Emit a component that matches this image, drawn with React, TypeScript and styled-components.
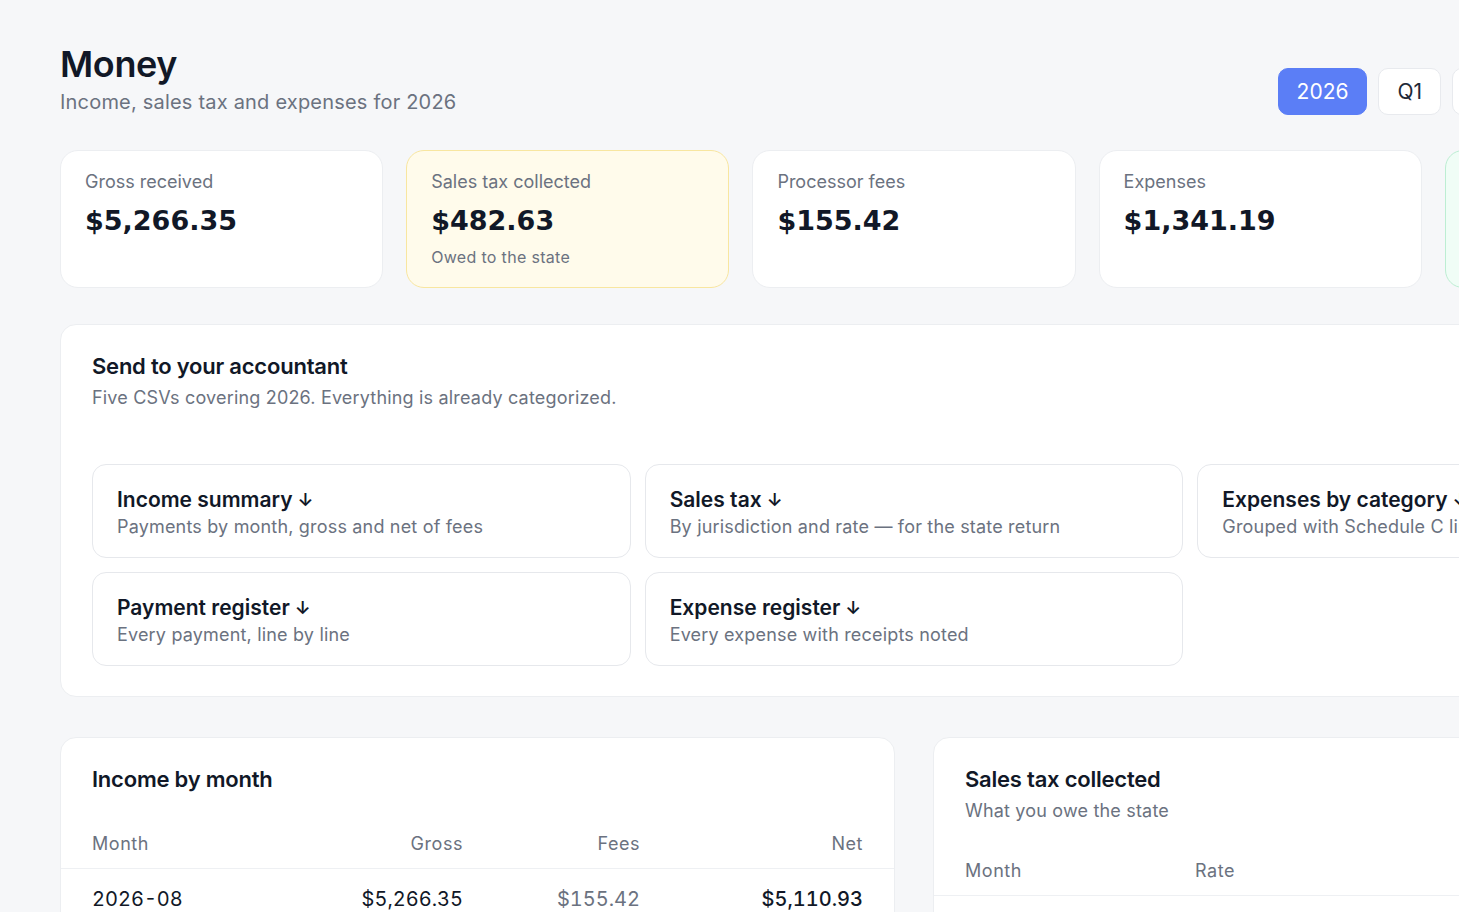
import React from 'react';
import styled, { createGlobalStyle } from 'styled-components';

const GlobalStyle = createGlobalStyle`
  html, body {
    margin: 0;
    padding: 0;
    overflow: hidden;
    background: #f6f7f9;
  }
  body {
    font-family: Inter, "Noto Sans", sans-serif;
    color: #111827;
  }
  * {
    box-sizing: border-box;
  }
`;

const Page = styled.div`
  width: 1828px;
  padding: 44px 60px 60px;
`;

const Header = styled.header`
  display: flex;
  justify-content: space-between;
  align-items: flex-start;
`;

const Title = styled.h1`
  margin: 0;
  font-size: 36px;
  line-height: 40px;
  font-weight: 600;
  letter-spacing: -0.01em;
`;

const Subtitle = styled.p`
  margin: 5px 0 0;
  font-size: 20px;
  line-height: 26px;
  color: #6b7280;
  letter-spacing: 0.01em;
`;

const PeriodGroup = styled.div`
  display: flex;
  gap: 11px;
  margin-top: 24px;
`;

const PeriodButton = styled.button<{ $active?: boolean }>`
  height: 47px;
  min-width: 60px;
  padding: 0 18px;
  border-radius: 10px;
  font-family: inherit;
  font-size: 21px;
  border: 1px solid ${({ $active }) => ($active ? '#5b7ef6' : '#e8eaee')};
  background: ${({ $active }) => ($active ? '#5b7ef6' : '#ffffff')};
  color: ${({ $active }) => ($active ? '#ffffff' : '#1f2937')};
  cursor: pointer;
`;

const StatGrid = styled.section`
  display: grid;
  grid-template-columns: repeat(5, 1fr);
  gap: 23px;
  margin-top: 35px;
`;

type Tone = 'plain' | 'warn' | 'good';

const toneBg: Record<Tone, string> = {
  plain: '#ffffff',
  warn: '#fffbeb',
  good: '#f0fdf6',
};

const toneBorder: Record<Tone, string> = {
  plain: '#eceef1',
  warn: '#f8e6a0',
  good: '#bdeed3',
};

const StatCard = styled.div<{ $tone: Tone }>`
  min-height: 138px;
  padding: 19px 24px;
  border-radius: 18px;
  background: ${({ $tone }) => toneBg[$tone]};
  border: 1px solid ${({ $tone }) => toneBorder[$tone]};
`;

const StatLabel = styled.div`
  font-size: 18px;
  line-height: 24px;
  color: #6b7280;
`;

const StatValue = styled.div`
  margin-top: 10px;
  font-family: "DejaVu Sans", sans-serif;
  font-weight: 700;
  font-size: 27px;
  line-height: 34px;
  color: #111827;
`;

const StatNote = styled.div`
  margin-top: 8px;
  font-size: 16px;
  line-height: 22px;
  color: #6b7280;
  letter-spacing: 0.02em;
`;

const Panel = styled.section`
  margin-top: 36px;
  background: #ffffff;
  border: 1px solid #eceef1;
  border-radius: 16px;
  padding: 27px 31px 30px;
`;

const PanelTitle = styled.h2`
  margin: 0;
  font-size: 22px;
  line-height: 28px;
  font-weight: 600;
  letter-spacing: -0.01em;
`;

const PanelSub = styled.p`
  margin: 6px 0 0;
  font-size: 18px;
  line-height: 24px;
  color: #6b7280;
  letter-spacing: 0.01em;
`;

const ExportGrid = styled.div`
  display: grid;
  grid-template-columns: repeat(3, 1fr);
  gap: 14px;
  margin-top: 54px;
`;

const ExportCard = styled.a`
  display: block;
  height: 94px;
  padding: 21px 24px;
  border: 1px solid #e6e8ec;
  border-radius: 14px;
  text-decoration: none;
  color: inherit;
  cursor: pointer;
`;

const ExportTitle = styled.div`
  font-size: 21px;
  line-height: 27px;
  font-weight: 600;
  color: #111827;
`;

const Arrow = styled.span`
  margin-left: 5px;
  font-size: 18px;
`;

const ExportDesc = styled.div`
  margin-top: 1px;
  font-size: 18px;
  line-height: 24px;
  color: #6b7280;
  letter-spacing: 0.01em;
`;

const TwoCol = styled.section`
  display: grid;
  grid-template-columns: 1fr 1fr;
  gap: 38px;
  margin-top: 40px;
`;

const TableCard = styled.div`
  background: #ffffff;
  border: 1px solid #eceef1;
  border-radius: 16px;
  padding-top: 27px;
`;

const TableHead = styled.div`
  padding: 0 31px;
`;

const TableBody = styled.div<{ $gap: number }>`
  margin-top: ${({ $gap }) => $gap}px;
`;

const Row = styled.div<{ $cols: string; $head?: boolean }>`
  display: grid;
  grid-template-columns: ${({ $cols }) => $cols};
  align-items: center;
  padding: 0 31px;
  height: ${({ $head }) => ($head ? '51px' : '60px')};
  border-bottom: 1px solid #eef0f3;
  font-size: ${({ $head }) => ($head ? '18px' : '20px')};
  color: ${({ $head }) => ($head ? '#6b7280' : '#111827')};
  letter-spacing: ${({ $head }) => ($head ? '0.03em' : '0')};
`;

const Cell = styled.div<{ $right?: boolean; $muted?: boolean; $strong?: boolean }>`
  text-align: ${({ $right }) => ($right ? 'right' : 'left')};
  color: ${({ $muted }) => ($muted ? '#6b7280' : 'inherit')};
  font-weight: ${({ $strong }) => ($strong ? 500 : 400)};
  font-variant-numeric: tabular-nums;
`;

const stats: { label: string; value: string; note?: string; tone: Tone }[] = [
  { label: 'Gross received', value: '$5,266.35', tone: 'plain' },
  { label: 'Sales tax collected', value: '$482.63', note: 'Owed to the state', tone: 'warn' },
  { label: 'Processor fees', value: '$155.42', tone: 'plain' },
  { label: 'Expenses', value: '$1,341.19', tone: 'plain' },
  { label: 'Net profit', value: '$3,769.74', note: 'Before income tax', tone: 'good' },
];

const exportsList = [
  { title: 'Income summary', desc: 'Payments by month, gross and net of fees' },
  { title: 'Sales tax', desc: 'By jurisdiction and rate — for the state return' },
  { title: 'Expenses by category', desc: 'Grouped with Schedule C lines' },
  { title: 'Payment register', desc: 'Every payment, line by line' },
  { title: 'Expense register', desc: 'Every expense with receipts noted' },
];

const periods = ['2026', 'Q1', 'Q2', 'Q3', 'Q4', 'YTD'];

const incomeCols = '1fr 140px 177px 223px';
const taxCols = '230px 160px 1fr 1fr';

const App: React.FC = () => {
  return (
    <>
      <GlobalStyle />
      <Page>
        <Header>
          <div>
            <Title>Money</Title>
            <Subtitle>Income, sales tax and expenses for 2026</Subtitle>
          </div>
          <PeriodGroup>
            {periods.map((p, i) => (
              <PeriodButton key={p} $active={i === 0}>
                {p}
              </PeriodButton>
            ))}
          </PeriodGroup>
        </Header>

        <StatGrid>
          {stats.map((s) => (
            <StatCard key={s.label} $tone={s.tone}>
              <StatLabel>{s.label}</StatLabel>
              <StatValue>{s.value}</StatValue>
              {s.note && <StatNote>{s.note}</StatNote>}
            </StatCard>
          ))}
        </StatGrid>

        <Panel>
          <PanelTitle>Send to your accountant</PanelTitle>
          <PanelSub>Five CSVs covering 2026. Everything is already categorized.</PanelSub>
          <ExportGrid>
            {exportsList.map((e) => (
              <ExportCard key={e.title}>
                <ExportTitle>
                  {e.title}
                  <Arrow>↓</Arrow>
                </ExportTitle>
                <ExportDesc>{e.desc}</ExportDesc>
              </ExportCard>
            ))}
          </ExportGrid>
        </Panel>

        <TwoCol>
          <TableCard>
            <TableHead>
              <PanelTitle>Income by month</PanelTitle>
            </TableHead>
            <TableBody $gap={25}>
              <Row $cols={incomeCols} $head>
                <Cell>Month</Cell>
                <Cell $right>Gross</Cell>
                <Cell $right>Fees</Cell>
                <Cell $right>Net</Cell>
              </Row>
              <Row $cols={incomeCols}>
                <Cell>2026-08</Cell>
                <Cell $right>$5,266.35</Cell>
                <Cell $right $muted>$155.42</Cell>
                <Cell $right $strong>$5,110.93</Cell>
              </Row>
            </TableBody>
          </TableCard>

          <TableCard>
            <TableHead>
              <PanelTitle>Sales tax collected</PanelTitle>
              <PanelSub>What you owe the state</PanelSub>
            </TableHead>
            <TableBody $gap={22}>
              <Row $cols={taxCols} $head>
                <Cell>Month</Cell>
                <Cell>Rate</Cell>
                <Cell $right>Taxable</Cell>
                <Cell $right>Tax</Cell>
              </Row>
              <Row $cols={taxCols}>
                <Cell>2026-08</Cell>
                <Cell>9.17%</Cell>
                <Cell $right>$5,266.35</Cell>
                <Cell $right $strong>$482.63</Cell>
              </Row>
            </TableBody>
          </TableCard>
        </TwoCol>
      </Page>
    </>
  );
};

export default App;
